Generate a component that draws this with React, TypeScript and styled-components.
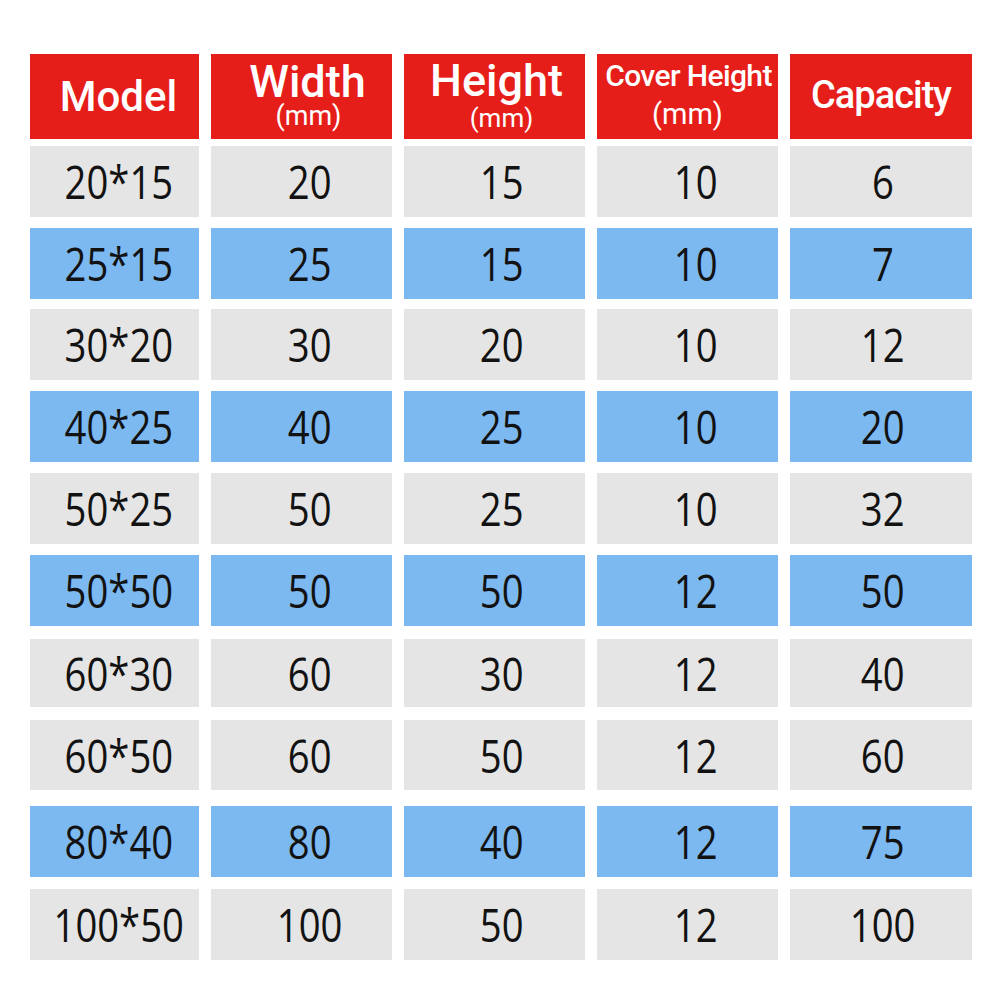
import React from "react";
import styled, { createGlobalStyle } from "styled-components";

const Global = createGlobalStyle`
  html, body { margin: 0; padding: 0; background: #ffffff; }
  body { width: 1001px; height: 1001px; overflow: hidden; }
`;

const Page = styled.div`
  width: 1001px;
  height: 1001px;
  background: #ffffff;
  padding-left: 30px;
  box-sizing: border-box;
  display: flex;
  flex-direction: column;
`;

const Row = styled.div<{ $mt: number; $h: number }>`
  display: grid;
  grid-template-columns: 169px 181px 181px 181px 182px;
  column-gap: 12px;
  margin-top: ${(p) => p.$mt}px;
  height: ${(p) => p.$h}px;
`;

const HeadCell = styled.div<{ $gap?: number }>`
  background: #e61e1a;
  color: #ffffff;
  font-family: Roboto, "Liberation Sans", sans-serif;
  font-weight: 500;
  display: flex;
  flex-direction: column;
  align-items: center;
  justify-content: center;
  gap: ${(p) => p.$gap ?? 0}px;
  overflow: hidden;
  white-space: nowrap;
`;

type TextProps = { $size: number; $lh: number; $dx?: number; $dy?: number; $ls?: number };

const HeadMain = styled.span<TextProps>`
  display: block;
  font-size: ${(p) => p.$size}px;
  line-height: ${(p) => p.$lh}px;
  letter-spacing: ${(p) => p.$ls ?? 0}px;
  transform: translate(${(p) => p.$dx ?? 0}px, ${(p) => p.$dy ?? 0}px);
`;

const HeadUnit = styled.span<TextProps>`
  display: block;
  font-size: ${(p) => p.$size}px;
  line-height: ${(p) => p.$lh}px;
  font-weight: 400;
  letter-spacing: ${(p) => p.$ls ?? 0}px;
  transform: translate(${(p) => p.$dx ?? 0}px, ${(p) => p.$dy ?? 0}px);
`;

const Cell = styled.div<{ $blue: boolean; $dx: number }>`
  background: ${(p) => (p.$blue ? "#7db9f1" : "#e5e5e5")};
  display: flex;
  align-items: center;
  justify-content: center;
  padding-left: ${(p) => Math.max(0, p.$dx * 2)}px;
  overflow: hidden;
`;

const Num = styled.span`
  display: inline-block;
  font-family: "Open Sans", "Noto Sans", sans-serif;
  font-size: 45px;
  line-height: 45px;
  color: #121212;
  transform: scaleX(0.85);
  white-space: nowrap;
`;

const colShift = [4, 8, 7, 8, 2];

type DataRow = { cells: string[]; blue: boolean; mt: number; h: number };

const rows: DataRow[] = [
  { cells: ["20*15", "20", "15", "10", "6"], blue: false, mt: 7, h: 71 },
  { cells: ["25*15", "25", "15", "10", "7"], blue: true, mt: 11, h: 71 },
  { cells: ["30*20", "30", "20", "10", "12"], blue: false, mt: 10, h: 71 },
  { cells: ["40*25", "40", "25", "10", "20"], blue: true, mt: 11, h: 71 },
  { cells: ["50*25", "50", "25", "10", "32"], blue: false, mt: 11, h: 71 },
  { cells: ["50*50", "50", "50", "12", "50"], blue: true, mt: 11, h: 71 },
  { cells: ["60*30", "60", "30", "12", "40"], blue: false, mt: 13, h: 68 },
  { cells: ["60*50", "60", "50", "12", "60"], blue: false, mt: 13, h: 70 },
  { cells: ["80*40", "80", "40", "12", "75"], blue: true, mt: 16, h: 71 },
  { cells: ["100*50", "100", "50", "12", "100"], blue: false, mt: 12, h: 71 },
];

export default function App() {
  return (
    <>
      <Global />
      <Page>
        <Row $mt={54} $h={85}>
          <HeadCell>
            <HeadMain $size={42} $lh={44} $dx={4} $dy={0}>Model</HeadMain>
          </HeadCell>
          <HeadCell $gap={2}>
            <HeadMain $size={45} $lh={36} $dx={6}>Width</HeadMain>
            <HeadUnit $size={27} $lh={28} $dx={7}>(mm)</HeadUnit>
          </HeadCell>
          <HeadCell $gap={7}>
            <HeadMain $size={45} $lh={36} $dx={2}>Height</HeadMain>
            <HeadUnit $size={26} $lh={24} $dx={7}>(mm)</HeadUnit>
          </HeadCell>
          <HeadCell $gap={8}>
            <HeadMain $size={30} $lh={30} $ls={-0.6} $dx={1} $dy={-2}>Cover Height</HeadMain>
            <HeadUnit $size={29} $lh={30} $dy={-2}>(mm)</HeadUnit>
          </HeadCell>
          <HeadCell>
            <HeadMain $size={38} $lh={44} $ls={-1} $dy={-2}>Capacity</HeadMain>
          </HeadCell>
        </Row>
        {rows.map((r, i) => (
          <Row key={i} $mt={r.mt} $h={r.h}>
            {r.cells.map((c, j) => (
              <Cell key={j} $blue={r.blue} $dx={colShift[j]}>
                <Num>{c}</Num>
              </Cell>
            ))}
          </Row>
        ))}
      </Page>
    </>
  );
}
